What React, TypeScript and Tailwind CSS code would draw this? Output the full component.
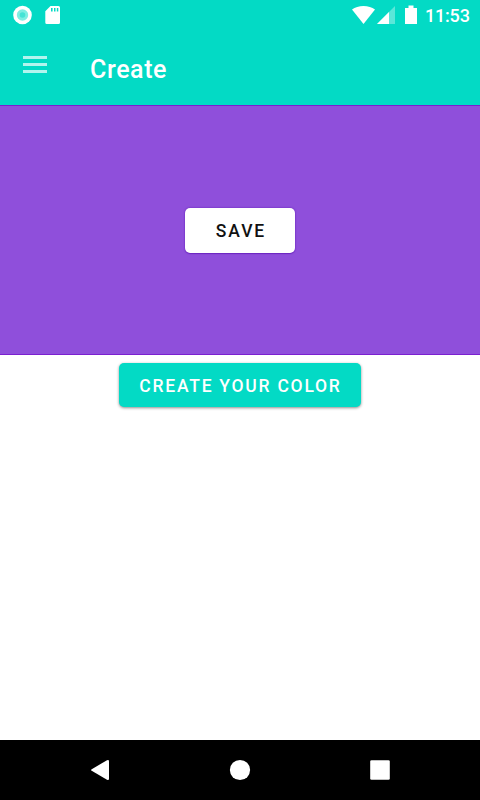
import React from "react";

const StatusBar: React.FC = () => (
  <div className="flex h-[30px] items-center justify-between text-white">
    <svg width="80" height="30" viewBox="0 0 80 30" fill="currentColor">
      <circle cx="22.5" cy="15" r="9.3" />
      <circle cx="22.5" cy="15" r="5.7" fill="#7eeee2" />
      <circle cx="22.5" cy="15" r="2.8" fill="#45e3d5" />
      <path
        fillRule="evenodd"
        d="M50.5 6h8a1.5 1.5 0 0 1 1.5 1.5v15a1.5 1.5 0 0 1-1.5 1.5H46.8a1.5 1.5 0 0 1-1.5-1.5V11.2zM51 8v3.5h1.6V8zM54 8v3.5h1.5V8zM56.8 8v3.5h1.5V8z"
      />
    </svg>
    <div className="flex h-[30px] items-center pr-2.5">
      <svg width="75" height="30" viewBox="350 0 75 30" fill="currentColor">
        <path d="M363.5 24L352 9.5C355 7.3 359 6 363.5 6S372 7.3 375 9.5z" />
        <path d="M395 6v18h-18z" opacity="0.35" />
        <path d="M389 12v12h-12z" />
        <path d="M408.5 5.5h5V8h3.5v16h-12V8h3.5z" />
      </svg>
      <span className="w-[45px] pt-0.5 text-[18px] leading-[30px] font-medium tracking-[-0.2px]">
        11:53
      </span>
    </div>
  </div>
);

const Toolbar: React.FC = () => (
  <div className="flex h-[75px] pl-[23px]">
    <button aria-label="menu" className="mt-[26px] flex h-[17px] w-6 flex-col justify-between">
      <span className="h-[3px] w-full bg-white/70" />
      <span className="h-[3px] w-full bg-white/70" />
      <span className="h-[3px] w-full bg-white/70" />
    </button>
    <h1 className="mt-[22px] ml-[43px] text-[25px] leading-9 font-medium tracking-[0.6px] text-white">
      Create
    </h1>
  </div>
);

const NavigationBar: React.FC = () => (
  <div className="flex h-[60px] items-center justify-center gap-[110px] bg-black text-white">
    <svg width="30" height="30" viewBox="0 0 30 30" fill="currentColor">
      <path d="M6.7 14.2L22 5.2Q24 4.4 24 6.3V23.7Q24 25.6 22 24.8L6.7 15.8Q5.4 15 6.7 14.2z" />
    </svg>
    <svg width="30" height="30" viewBox="0 0 30 30" fill="currentColor">
      <circle cx="15" cy="15" r="10.1" />
    </svg>
    <svg width="30" height="30" viewBox="0 0 30 30" fill="currentColor">
      <rect x="5.2" y="5.2" width="19.6" height="19.6" rx="1.3" />
    </svg>
  </div>
);

const App: React.FC = () => {
  return (
    <div className="flex h-[800px] w-[480px] flex-col bg-white font-[Roboto,sans-serif]">
      <header className="bg-[#03dac5]">
        <StatusBar />
        <Toolbar />
      </header>
      <main className="flex flex-1 flex-col items-center">
        <section className="flex h-[250px] w-full items-center justify-center border-y border-[#7b1fd0] bg-[#8f4fdb]">
          <button className="h-[45px] w-[110px] rounded-[5px] bg-white pt-0.5 pl-0.5 text-[17.5px] font-medium tracking-[1.9px] text-[#111] shadow-[0_0_2px_rgba(80,0,170,0.7),0_1px_1px_rgba(80,0,170,0.4)]">
            SAVE
          </button>
        </section>
        <button className="mt-[7.5px] h-11 w-[242px] rounded-[5px] bg-[#03dac5] pt-[3px] pl-px text-[17.5px] font-medium tracking-[1.75px] text-white shadow-[0_1px_3px_rgba(0,0,0,0.45)]">
          CREATE YOUR COLOR
        </button>
      </main>
      <NavigationBar />
    </div>
  );
};

export default App;
